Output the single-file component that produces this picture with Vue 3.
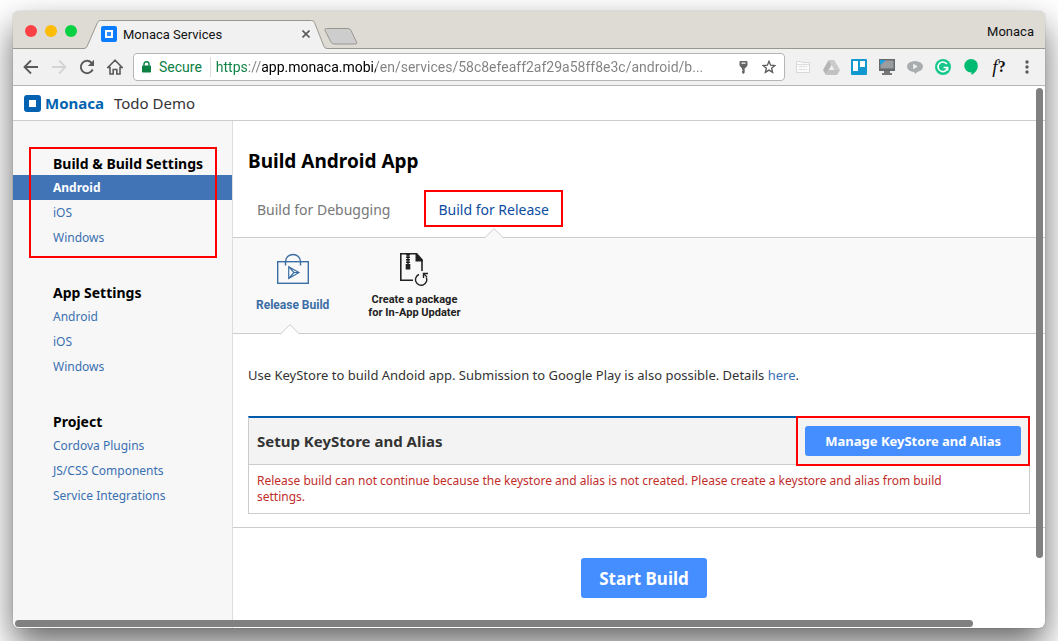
<script setup>
import { ref } from 'vue'

const url = ref('https://app.monaca.mobi/en/services/58c8efeaff2af29a58ff8e3c/android/b...')

const groups = [
  { title: 'Build & Build Settings', marked: true, items: ['Android', 'iOS', 'Windows'], active: 'Android' },
  { title: 'App Settings', items: ['Android', 'iOS', 'Windows'] },
  { title: 'Project', items: ['Cordova Plugins', 'JS/CSS Components', 'Service Integrations'] }
]
</script>

<template>
  <div class="desktop">
    <div class="window">
      <header class="titlebar">
        <div class="lights">
          <button class="light red" aria-label="Close window"></button>
          <button class="light amber" aria-label="Minimize window"></button>
          <button class="light green" aria-label="Zoom window"></button>
        </div>
        <div class="tab">
          <svg class="tab-shape" width="246" height="30" viewBox="0 0 246 30" aria-hidden="true">
            <path d="M0 28.5H2Q4 28.5 5 26.500L15.500 2.500Q16.500 .500 18.500 .500H229.500Q231.500 .500 232.500 2.500L242 26.500Q243 28.500 245 28.500H246V30H0Z" fill="#f2f1f1" />
            <path d="M0 28.500H2Q4 28.500 5 26.500L15.500 2.500Q16.500 .500 18.500 .500H229.500Q231.500 .500 232.500 2.500L242 26.500Q243 28.500 245 28.500H246" fill="none" stroke="#99978f" />
          </svg>
          <svg class="favicon" width="16" height="16" viewBox="0 0 16 16" aria-hidden="true">
            <rect width="16" height="16" rx="2" fill="#0a7cff" />
            <rect x="5" y="5" width="6" height="6" fill="none" stroke="#fff" stroke-width="2" />
            <rect x="6" y="6" width="4" height="4" fill="#2b8dff" />
          </svg>
          <span class="tab-title">Monaca Services</span>
          <button class="tab-close" aria-label="Close tab">
            <svg width="8" height="8" viewBox="0 0 8 8"><path d="M.5.5l7 7M7.500.5l-7 7" stroke="#5a5a5a" stroke-width="1.600" /></svg>
          </button>
        </div>
        <button class="new-tab" aria-label="New tab">
          <svg width="34" height="17" viewBox="0 0 34 17">
            <path d="M2.500 .5H24Q26 .5 27 2.500L32.500 14Q33.500 16 31.500 16H10Q8 16 7 14L1 2.500Q.5 .5 2.500 .5Z" fill="#cecdcd" stroke="#99978f" />
          </svg>
        </button>
        <span class="profile">Monaca</span>
      </header>

      <div class="toolbar">
        <button aria-label="Back">
          <svg width="16" height="16" viewBox="0 0 16 16"><path d="M15 8H2M8 1.500L1.500 8 8 14.500" fill="none" stroke="#5a5a5a" stroke-width="1.800" /></svg>
        </button>
        <button aria-label="Forward">
          <svg width="16" height="16" viewBox="0 0 16 16"><path d="M1 8h13M8 1.500L14.500 8 8 14.500" fill="none" stroke="#d3d3d3" stroke-width="1.800" /></svg>
        </button>
        <button aria-label="Reload">
          <svg width="16" height="16" viewBox="0 0 16 16"><path d="M13.700 10.500A6.200 6.200 0 1 1 12.600 3.800" fill="none" stroke="#5a5a5a" stroke-width="1.900" /><path d="M15 .8V7H8.800Z" fill="#5a5a5a" /></svg>
        </button>
        <button aria-label="Home">
          <svg width="16" height="16" viewBox="1 0 16 16"><path d="M9 1.200L1.800 8.500H4V15H7.200V10.500H10.800V15H14V8.500H16.200Z" fill="none" stroke="#5a5a5a" stroke-width="1.600" /></svg>
        </button>

        <div class="omnibox">
          <svg width="9" height="12" viewBox="0 0 9 12" aria-hidden="true"><rect y="4.500" width="9" height="7" rx=".8" fill="#0b8043" /><path d="M2 5V3a2.500 2.300 0 0 1 5 0V5" fill="none" stroke="#0b8043" stroke-width="1.400" /></svg>
          <span class="secure">Secure</span>
          <input v-model="url" class="url" type="text" aria-label="Address" spellcheck="false">
          <button aria-label="Saved passwords">
            <svg width="9" height="13" viewBox="0 0 9 13"><path fill-rule="evenodd" d="M1.500 0H7.500Q8.500 0 8.500 1V4.500L6.500 7H5.700V11.500L4.500 13 3 11.800V10L4 9.500 3 8.500V7H2.500L.5 4.500V1Q.5 0 1.500 0ZM2.500 1.500V2.800H6.500V1.500Z" fill="#666" /></svg>
          </button>
          <button aria-label="Bookmark this page">
            <svg width="14" height="14" viewBox="0 0 14 14"><path d="M7 1.300L8.600 5.200 12.900 5.500 9.600 8.200 10.600 12.400 7 10.100 3.400 12.400 4.400 8.200 1.100 5.500 5.400 5.200Z" fill="none" stroke="#5a5a5a" stroke-width="1.300" /></svg>
          </button>
        </div>

        <div class="extensions">
          <button aria-label="Notes">
            <svg width="16" height="16" viewBox="0 0 16 16"><path d="M1.500 13.500V2.500H6L7 3.500H14.500V13.500Z" fill="#fafafa" stroke="#d8d8d8" /><path d="M1.500 5.500H14.500" stroke="#ddd" /><path d="M4 7.500H12M4 10.500H12" stroke="#dcdcdc" stroke-dasharray="3 .5" /></svg>
          </button>
          <button aria-label="Drive">
            <svg width="17" height="15" viewBox="0 0 17 15"><path d="M5.700 0H11.200L17 10H11.400Z" fill="#cbcbcb" /><path d="M5.700 0L8.500 5 2.900 15 0 10Z" fill="#b6b6b6" /><path d="M5.800 10H17L14 15H2.900Z" fill="#c1c1c1" /></svg>
          </button>
          <button aria-label="Boards">
            <svg width="16" height="16" viewBox="0 0 16 16"><rect width="16" height="16" rx="1" fill="#1199cf" /><rect x="2" y="2" width="5" height="10" fill="#fff" /><rect x="9" y="2" width="5" height="6" fill="#fff" /></svg>
          </button>
          <button aria-label="Screen capture">
            <svg width="16" height="16" viewBox="0 0 16 16"><rect width="16" height="12" fill="#66696b" /><rect x="1.500" y="1.500" width="13" height="8" fill="#9a9da0" /><path d="M5 12H11V14H13V16H3V14H5Z" fill="#777" /><path d="M1 1H6V2L2 5.500H1Z" fill="#1da0df" /></svg>
          </button>
          <button aria-label="Video">
            <svg width="16" height="14" viewBox="0 0 16 14"><ellipse cx="8" cy="6.500" rx="8" ry="5.500" fill="#aaadaf" /><path d="M6 11H11L8.500 14Z" fill="#aaadaf" /><path d="M6.200 3.800V9.200L10.700 6.500Z" fill="#f1f1f1" /></svg>
          </button>
          <button aria-label="Grammar">
            <svg width="16" height="16" viewBox="0 0 16 16"><circle cx="8" cy="8" r="8" fill="#15c78a" /><path d="M11.800 5A4.800 4.800 0 1 0 12.600 8.500H8.500M12.600 8.500V11.500" fill="none" stroke="#fff" stroke-width="1.600" /></svg>
          </button>
          <button aria-label="Hangouts">
            <svg width="14" height="16" viewBox="0 0 14 16"><path d="M7 0A6.800 6.500 0 0 1 13.800 7C13.800 11 11 14 7.500 16V13.400A6.700 6.700 0 0 1 .2 6.700 6.800 6.700 0 0 1 7 0Z" fill="#02bb73" /></svg>
          </button>
          <button class="font-finder" aria-label="Font finder"><i>f</i>?</button>
          <button aria-label="Menu">
            <svg width="4" height="14" viewBox="0 0 4 14"><g fill="#5a5a5a"><circle cx="2" cy="2" r="1.700" /><circle cx="2" cy="7" r="1.700" /><circle cx="2" cy="12" r="1.700" /></g></svg>
          </button>
        </div>
      </div>

      <div class="page">
        <div class="page-head">
          <a class="brand" href="#">
            <svg width="17" height="17" viewBox="0 0 17 17" aria-hidden="true"><rect width="17" height="17" rx="3" fill="#0062b1" /><rect x="5" y="5" width="7" height="7" fill="#fff" /></svg>
            <span>Monaca</span>
          </a>
          <span class="project">Todo Demo</span>
        </div>

        <div class="columns">
          <nav class="sidebar" aria-label="Settings">
            <section v-for="g in groups" :key="g.title" class="group" :class="{ marked: g.marked }">
              <h2>{{ g.title }}</h2>
              <ul>
                <li v-for="item in g.items" :key="item">
                  <a href="#" :class="{ active: g.active === item }">{{ item }}</a>
                </li>
              </ul>
            </section>
          </nav>

          <main class="main">
            <h1>Build Android App</h1>
            <nav class="tabs" aria-label="Build type">
              <a href="#">Build for Debugging</a>
              <a href="#" class="current">Build for Release
                <svg class="notch" width="18" height="10" viewBox="0 0 18 10" aria-hidden="true"><path d="M0 10V9.500L9 .7 18 9.500V10Z" fill="#f9f9f9" /><path d="M0 9.500L9 .7 18 9.500" fill="none" stroke="#ccc" /></svg>
              </a>
            </nav>

            <div class="kinds">
              <a href="#" class="kind selected">
                <svg width="34" height="34" viewBox="0 0 34 34" aria-hidden="true">
                  <g fill="none" stroke="#3c6ea5" stroke-width="1.400"><rect x="1.700" y="9.700" width="30.600" height="21.600" /><path d="M9.500 13.500V9.500A7.500 7 0 0 1 24.500 9.500V13.500" /><path d="M12.700 14.700L23 20.500 12.700 26.500ZM12.700 14.700L18 20.500 12.700 26.500M18 20.500H23" stroke-width="1.200" /></g>
                </svg>
                <span>Release Build</span>
                <svg class="notch" width="18" height="10" viewBox="0 0 18 10" aria-hidden="true"><path d="M0 10V9.500L9 .7 18 9.500V10Z" fill="#fff" /><path d="M0 9.500L9 .7 18 9.500" fill="none" stroke="#ccc" /></svg>
              </a>
              <a href="#" class="kind package">
                <svg width="30" height="34" viewBox="0 0 30 34" aria-hidden="true">
                  <path d="M14 28.200H1.800V1.800H17M23 8V19" fill="none" stroke="#222" stroke-width="1.600" />
                  <path d="M16.500 1H18L23.800 7.500V9.500H16.500Z" fill="#222" />
                  <path d="M9 2V12" stroke="#222" stroke-width="4" stroke-dasharray="1.500 1" /><path d="M9 2V12" stroke="#222" stroke-width="1.500" />
                  <rect x="6.700" y="12" width="4.600" height="5.500" fill="#222" />
                  <path d="M20 22.500A5.600 5.600 0 1 0 27.300 25.500" fill="none" stroke="#222" stroke-width="1.400" />
                  <path d="M29 21.500H24.500V26" fill="none" stroke="#222" stroke-width="1.400" /><path d="M24.500 21.500L28 25" stroke="#222" stroke-width="1.200" />
                </svg>
                <span>Create a package<br>for In-App Updater</span>
              </a>
            </div>

            <p class="intro">Use KeyStore to build Andoid app. Submission to Google Play is also possible. Details <a href="#">here</a>.</p>

            <section class="panel">
              <div class="panel-head">
                <h2>Setup KeyStore and Alias</h2>
                <div class="panel-action"><button class="primary">Manage KeyStore and Alias</button></div>
              </div>
              <p class="error">Release build can not continue because the keystore and alias is not created. Please create a keystore and alias from build settings.</p>
            </section>

            <div class="start"><button class="primary large">Start Build</button></div>
          </main>
        </div>
        <div class="scroll-y"></div>
        <div class="scroll-x"></div>
      </div>
    </div>
  </div>
</template>

<style>
html, body { margin: 0; background: #fff; overflow: hidden; }
</style>

<style scoped>
* { box-sizing: border-box; }
h1, h2, p, ul { margin: 0; padding: 0; }
ul { list-style: none; }
svg { display: block; flex: none; }
a { color: #3a70b2; text-decoration: none; }
button { border: 0; padding: 0; background: none; font: inherit; color: inherit; }

.desktop {
  min-height: 100vh;
  display: flex;
  padding: 11px 13px 14px;
  overflow: hidden;
  background: #fff;
  font-family: "Noto Sans", "Open Sans", sans-serif;
  font-size: 13px;
  color: #333;
}
.window {
  flex: 1;
  min-width: 0;
  display: flex;
  flex-direction: column;
  border-radius: 6px;
  overflow: hidden;
  background: #fff;
  box-shadow: 0 0 1px rgba(0, 0, 0, .5), 0 16px 34px rgba(0, 0, 0, .6);
}

.titlebar {
  display: flex;
  align-items: flex-end;
  height: 38px;
  background: #dedbd5;
  border-bottom: 1px solid #99978f;
  font-family: Roboto, sans-serif;
  color: #111;
}
.lights { display: flex; gap: 8px; align-self: center; padding: 2px 5px 0 12px; }
.light { width: 12px; height: 12px; border-radius: 50%; }
.red { background: #fc4146; }
.amber { background: #fdbc05; }
.green { background: #06d142; }
.tab {
  position: relative;
  display: flex;
  align-items: center;
  width: 246px;
  height: 28px;
  padding: 0 18px 0 19px;
}
.tab-shape { position: absolute; left: 0; top: 0; }
.favicon, .tab-title, .tab-close { position: relative; }
.tab-title { flex: 1; margin-left: 6px; font-size: 13px; }
.new-tab { margin: 0 0 3px -4px; }
.profile { margin: 0 11px 0 auto; align-self: center; font-size: 13px; padding-top: 3px; }

.toolbar {
  display: flex;
  align-items: center;
  gap: 12px;
  height: 37px;
  padding: 0 4px 0 10px;
  background: #f2f1f1;
  border-bottom: 1px solid #b5b5b5;
  font-family: Roboto, sans-serif;
}
.omnibox {
  flex: 1;
  min-width: 0;
  display: flex;
  align-items: center;
  height: 28px;
  margin: 0 -8px 0 -2px;
  padding: 0 8px;
  border: 1px solid #b5b5b5;
  border-radius: 4px;
  background: #fff;
  font-size: 14px;
}
.secure {
  margin-left: 8px;
  padding-right: 8px;
  line-height: 20px;
  color: #0b8043;
  border-right: 1px solid #ddd;
}
.url {
  flex: 1;
  min-width: 0;
  height: 20px;
  margin: 0 8px 0 5px;
  padding: 0;
  border: 0;
  outline: 0;
  font-family: Roboto, sans-serif;
  font-size: 14px;
  color: transparent;
  background: linear-gradient(90deg, #0b8043 32px, #808080 32px, #808080 46px, #000 46px, #000 160px, #808080 160px);
  -webkit-background-clip: text;
  background-clip: text;
}
.omnibox button + button { margin-left: 14px; }
.extensions { display: flex; align-items: center; }
.extensions button { display: flex; justify-content: center; width: 28px; }
.extensions .font-finder { align-items: center; font: 700 16px/20px "Liberation Serif", serif; color: #111; }
.font-finder i { font-size: 19px; font-weight: 400; }

.page { position: relative; flex: 1; display: flex; flex-direction: column; }
.page-head {
  display: flex;
  align-items: center;
  gap: 10px;
  height: 35px;
  padding: 0 11px;
  border-bottom: 1px solid #ccc;
}
.brand { display: flex; align-items: center; gap: 4px; color: #0062b1; font-size: 15px; line-height: 20px; font-weight: 700; }
.project { font-size: 15px; line-height: 20px; }

.columns { flex: 1; display: flex; }
.sidebar {
  flex: none;
  width: 220px;
  padding-top: 30px;
  background: #f7f7f7;
  border-right: 1px solid #ddd;
}
.group { position: relative; margin-bottom: 30px; }
.group h2 { padding: 2px 0 0 40px; font-size: 14px; line-height: 22px; color: #000; white-space: nowrap; }
.group a { display: block; padding-left: 40px; font-size: 12px; line-height: 25px; }
.group a.active { background: #4074b7; color: #fff; font-weight: 700; }
.marked::after {
  content: "";
  position: absolute;
  inset: -4px 15px -8px 16px;
  border: 2px solid #f00;
  pointer-events: none;
}

.main { flex: 1; min-width: 0; }
h1 { padding: 28px 15px 0; font-size: 19px; line-height: 24px; color: #000; }
.tabs { display: flex; gap: 20px; padding: 17px 10px 10px; border-bottom: 1px solid #ccc; }
.tabs a { position: relative; padding: 9px 12px 7px; border: 2px solid transparent; font-size: 14px; line-height: 17px; color: #777; }
.tabs a.current { color: #0c4da2; border-color: #f00; }
.notch { position: absolute; left: 50%; margin-left: -9px; }
.tabs .notch { bottom: -13px; }

.kinds {
  display: flex;
  gap: 39px;
  padding: 14px 23px 13px;
  background: #f9f9f9;
  border-bottom: 1px solid #ccc;
  font-family: Roboto, sans-serif;
  font-size: 12px;
  font-weight: 700;
  line-height: 13px;
}
.kind { position: relative; display: flex; flex-direction: column; align-items: center; gap: 7px; min-height: 68px; color: #222; text-align: center; }
.kind.selected { gap: 13px; color: #3c6ea5; }
.package { font-size: 11px; }
.kind .notch { bottom: -14px; margin-left: -12px; }

.intro { padding: 31px 15px; font-size: 13px; line-height: 20px; }
.panel { margin: 0 15px 13px; border: 1px solid #ccc; border-top: 2px solid #005bab; }
.panel-head {
  display: flex;
  align-items: center;
  justify-content: space-between;
  height: 47px;
  padding-left: 8px;
  background: #f3f3f3;
  border-bottom: 1px solid #ccc;
}
.panel-head h2 { font-size: 15px; line-height: 20px; }
.panel-action { margin: -2px -1px -1px 0; padding: 8px 7px; border: 2px solid #f00; }
.primary { display: block; height: 30px; padding: 0 20px; border-radius: 3px; background: #458eff; color: #fff; font-size: 13px; font-weight: 700; }
.error { padding: 8px 60px 8px 8px; font-size: 12px; line-height: 16px; color: #c12e2a; }
.start { display: flex; justify-content: center; padding: 30px 0 30px 10px; border-top: 1px solid #ccc; }
.large { height: 40px; padding: 0 18px; font-size: 17px; }

.scroll-y, .scroll-x { position: absolute; background: #808080; border-radius: 4px; }
.scroll-y { top: 2px; right: 2px; width: 7px; height: calc(87% - 2px); }
.scroll-x { left: 2px; bottom: 1px; height: 7px; width: calc(93% - 2px); }
</style>
